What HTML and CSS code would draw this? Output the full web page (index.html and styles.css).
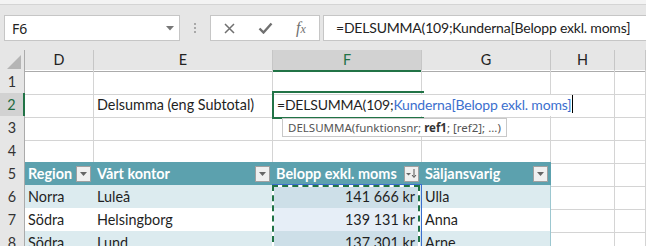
FILE: index.html
```html
<!DOCTYPE html>
<html lang="sv">
<head>
  <meta charset="UTF-8">
  <title>Delsumma</title>
  <link rel="stylesheet" href="styles.css">
</head>
<body>
  <div class="ribbon-edge"></div>

  <!-- Formula bar -->
  <div class="formula-bar">
    <div class="name-box">
      <span>F6</span>
      <svg class="caret" width="8" height="5" viewBox="0 0 8 5"><path d="M0 0h8L4 4.5z" fill="#777"/></svg>
    </div>
    <div class="grip"><i></i><i></i><i></i></div>
    <div class="fx-buttons">
      <svg width="11" height="11" viewBox="0 0 11 11"><path d="M1 1l9 9M10 1l-9 9" stroke="#707070" stroke-width="1.5"/></svg>
      <svg width="15" height="12" viewBox="0 0 15 12"><path d="M1.5 6.5l4 4 8-9" stroke="#707070" stroke-width="2.4" fill="none"/></svg>
      <span class="fx">f<span class="fx-x">x</span></span>
    </div>
    <div class="formula-input">=DELSUMMA(109;Kunderna[Belopp exkl. moms]</div>
  </div>

  <!-- Grid -->
  <div class="sheet">
    <div class="row col-heads">
      <div class="corner"><svg width="14" height="14" viewBox="0 0 14 14"><path d="M14 0v14H0z" fill="#b5b5b5"/></svg></div>
      <div class="ch">D</div>
      <div class="ch">E</div>
      <div class="ch ch-active">F</div>
      <div class="ch">G</div>
      <div class="ch">H</div>
      <div class="ch"></div>
    </div>

    <div class="row">
      <div class="rh">1</div>
      <div class="cell"></div><div class="cell"></div><div class="cell"></div>
      <div class="cell"></div><div class="cell"></div><div class="cell"></div>
    </div>

    <div class="row">
      <div class="rh rh-active">2</div>
      <div class="cell"></div>
      <div class="cell">Delsumma (eng Subtotal)</div>
      <div class="cell editing">=DELSUMMA(109;<span class="ref">Kunderna[Belopp exkl. moms]</span><span class="caret-bar"></span></div>
      <div class="cell covered"></div>
      <div class="cell"></div><div class="cell"></div>
    </div>

    <div class="row">
      <div class="rh">3</div>
      <div class="cell"></div><div class="cell"></div>
      <div class="cell has-tip">
        <div class="tip">DELSUMMA(funktionsnr; <b>ref1</b>; [ref2]; ...)</div>
      </div>
      <div class="cell"></div><div class="cell"></div><div class="cell"></div>
    </div>

    <div class="row">
      <div class="rh">4</div>
      <div class="cell"></div><div class="cell"></div><div class="cell"></div>
      <div class="cell"></div><div class="cell"></div><div class="cell"></div>
    </div>

    <div class="row">
      <div class="rh">5</div>
      <div class="cell th">Region<span class="filter"><svg width="7" height="4" viewBox="0 0 7 4"><path d="M0 0h7L3.5 4z" fill="#666"/></svg></span></div>
      <div class="cell th">Vårt kontor<span class="filter"><svg width="7" height="4" viewBox="0 0 7 4"><path d="M0 0h7L3.5 4z" fill="#666"/></svg></span></div>
      <div class="cell th">Belopp exkl. moms<span class="filter"><svg width="11" height="10" viewBox="0 0 11 10"><path d="M0 4h5L2.5 6.5z" fill="#666"/><path d="M8 0v8M6 6l2 2.5L10 6" stroke="#555" stroke-width="1" fill="none"/></svg></span></div>
      <div class="cell th th-last">Säljansvarig<span class="filter"><svg width="7" height="4" viewBox="0 0 7 4"><path d="M0 0h7L3.5 4z" fill="#666"/></svg></span></div>
      <div class="cell"></div><div class="cell"></div>
    </div>

    <div class="row">
      <div class="rh">6</div>
      <div class="cell band">Norra</div>
      <div class="cell band">Luleå</div>
      <div class="cell band sel num">141 666 kr
        <div class="ref-range"><div class="ants"></div></div>
      </div>
      <div class="cell band last">Ulla</div>
      <div class="cell"></div><div class="cell"></div>
    </div>

    <div class="row">
      <div class="rh">7</div>
      <div class="cell plain">Södra</div>
      <div class="cell plain">Helsingborg</div>
      <div class="cell plain sel num">139 131 kr</div>
      <div class="cell plain last">Anna</div>
      <div class="cell"></div><div class="cell"></div>
    </div>

    <div class="row">
      <div class="rh">8</div>
      <div class="cell band">Södra</div>
      <div class="cell band">Lund</div>
      <div class="cell band sel num">137 301 kr</div>
      <div class="cell band last">Arne</div>
      <div class="cell"></div><div class="cell"></div>
    </div>
  </div>
</body>
</html>
```

FILE: styles.css
```css
/* Page */
body {
  margin: 0;
  height: 246px;
  overflow: hidden;
  background: #fff;
  font-family: Lato, "Liberation Sans", sans-serif;
  color: #1f1f1f;
}

.ribbon-edge {
  height: 4px;
  background: #f3f3f3;
  border-bottom: 1px solid #d4d4d4;
}

/* Formula bar */
.formula-bar {
  display: flex;
  align-items: flex-start;
  height: 45px;
  box-sizing: border-box;
  padding: 10px 0 0 4px;
  background: #e6e6e6;
}

.name-box {
  width: 176px;
  height: 26px;
  box-sizing: border-box;
  border: 1px solid #c6c6c6;
  background: #fff;
  display: flex;
  align-items: center;
  justify-content: space-between;
  padding: 0 5px 0 7px;
  font: 14px "Noto Sans", sans-serif;
  color: #222;
}

.grip {
  width: 30px;
  display: flex;
  flex-direction: column;
  align-items: center;
  gap: 2px;
  padding-top: 8px;
}

.grip i {
  width: 2px;
  height: 2px;
  background: #a8a8a8;
}

.fx-buttons {
  width: 110px;
  height: 26px;
  box-sizing: border-box;
  border: 1px solid #c6c6c6;
  background: #fff;
  display: grid;
  grid-template-columns: repeat(3, 36px);
  justify-items: center;
  align-items: center;
}

.fx {
  font: italic 16px "Liberation Serif", serif;
  color: #707070;
}

.fx-x {
  font-size: 12px;
}

.formula-input {
  flex: 1;
  margin: 0 -10px 0 3px;
  height: 26px;
  box-sizing: border-box;
  border: 1px solid #c6c6c6;
  background: #fff;
  padding-left: 12px;
  font-size: 14px;
  letter-spacing: -0.2px;
  line-height: 24px;
  white-space: nowrap;
  color: #222;
}

/* Sheet */
.row {
  display: grid;
  grid-template-columns: 25px 69px 179px 149px 129px 64px 1fr;
  height: 23px;
}

.cell,
.ch,
.rh {
  box-sizing: border-box;
  border-right: 1px solid #d4d4d4;
  border-bottom: 1px solid #d4d4d4;
  white-space: nowrap;
}

.cell {
  padding: 0 3px;
  font-size: 14.4px;
  line-height: 24px;
}

.col-heads {
  height: 20px;
  background: #e6e6e6;
}

.corner {
  border-right: 1px solid #ababab;
  border-bottom: 1px solid #ababab;
  display: flex;
  justify-content: flex-end;
  align-items: flex-end;
  padding: 0 3px 2px 0;
}

.ch {
  border-right-color: #c6c6c6;
  border-bottom-color: #ababab;
  text-align: center;
  font-size: 14.4px;
  line-height: 20px;
  color: #222;
}

.ch-active {
  background: #d2d2d2;
  color: #217346;
  border-bottom: 2px solid #217346;
}

.rh {
  background: #e6e6e6;
  border-right-color: #ababab;
  border-bottom-color: #cfcfcf;
  text-align: center;
  font-size: 14.4px;
  line-height: 24px;
  color: #333;
}

.rh-active {
  background: #d2d2d2;
  color: #1e6b41;
  border-right: 2px solid #217346;
}

/* Edited cell F2 */
.editing {
  position: relative;
  z-index: 2;
  overflow: visible;
  border-right-color: transparent;
  padding-left: 4px;
  font-size: 14px;
  letter-spacing: -0.2px;
}

.editing::before {
  content: "";
  position: absolute;
  left: -1px;
  top: -2px;
  width: 150px;
  bottom: -2px;
  border: 2px solid #217346;
  border-right: none;
}

.covered {
  border-right-color: transparent;
}

.ref {
  color: #3b6fce;
}

.caret-bar {
  display: inline-block;
  width: 1px;
  height: 18px;
  margin-left: 1px;
  vertical-align: -3px;
  background: #000;
}

/* Function tooltip */
.has-tip {
  position: relative;
}

.tip {
  position: absolute;
  z-index: 3;
  left: 9px;
  top: 2px;
  height: 19px;
  box-sizing: border-box;
  padding: 0 5px;
  border: 1px solid #c8c8c8;
  background: #fff;
  font: 11.5px "Noto Sans", sans-serif;
  line-height: 17px;
  color: #555;
}

.tip b {
  color: #333;
}

/* Table */
.th {
  background: #5ca1ae;
  border-right-color: #5ca1ae;
  border-bottom: 1px solid #000;
  color: #fff;
  font-weight: 700;
  display: flex;
  justify-content: space-between;
  align-items: center;
  padding-right: 2px;
}

.filter {
  width: 15px;
  height: 16px;
  box-sizing: border-box;
  border: 1px solid #a0a0a0;
  background: #f0f0f0;
  display: flex;
  align-items: center;
  justify-content: center;
}

.band {
  background: #dcebef;
  border-right-color: #dcebef;
  border-bottom-color: #dcebef;
}

.plain {
  background: #fff;
  border-right-color: #fff;
  border-bottom-color: #fff;
}

.band.sel {
  background: #cddfe8;
}

.plain.sel {
  background: #e6eef7;
}

.last {
  border-right-color: #9cc7d0;
}

.num {
  text-align: right;
  padding-right: 6px;
}

.sel {
  position: relative;
}

.ref-range {
  position: absolute;
  z-index: 2;
  left: -1px;
  top: -1px;
  width: 150px;
  height: 120px;
  box-sizing: border-box;
  border: 1px solid #3b6fce;
}

.ants {
  position: absolute;
  inset: 0 1px 0 -1px;
  border: 2px solid #fff;
}

.ants::before {
  content: "";
  position: absolute;
  inset: -2px;
  border: 2px dashed #217346;
}
```
